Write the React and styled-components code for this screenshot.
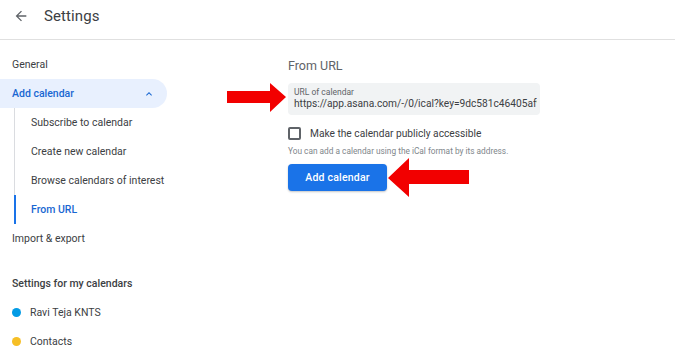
import React from "react";
import styled, { createGlobalStyle } from "styled-components";

const Global = createGlobalStyle`
  html, body { margin: 0; padding: 0; background: #fff; }
  body { font-family: Roboto, "Noto Sans", Arial, sans-serif; color: #3c4043; }
  * { box-sizing: border-box; }
`;

const Page = styled.div`
  position: relative;
  width: 675px;
  height: 356px;
  overflow: hidden;
`;

const Header = styled.header`
  height: 40px;
  display: flex;
  align-items: center;
  padding-left: 13px;
  gap: 15px;
  border-bottom: 1px solid #e0e0e0;
  padding-bottom: 7px;
`;

const Title = styled.h1`
  margin: 0;
  font-size: 15px;
  font-weight: 400;
  color: #3c4043;
  letter-spacing: 0.1px;
`;

const Body = styled.div`
  display: grid;
  grid-template-columns: 167px 1fr;
  column-gap: 121px;
  padding-top: 10px;
`;

const Nav = styled.nav`
  display: flex;
  flex-direction: column;
`;

const NavItem = styled.div`
  height: 29px;
  display: flex;
  align-items: center;
  justify-content: space-between;
  padding: 0 12px;
  font-size: 10.5px;
  font-weight: ${(p) => (p.$active ? 500 : 400)};
  color: ${(p) => (p.$active ? "#1967d2" : "#3c4043")};
  background: ${(p) => (p.$active ? "#e8f0fe" : "transparent")};
  border-radius: ${(p) => (p.$active ? "0 15px 15px 0" : "0")};
`;

const SubList = styled.div`
  margin-left: 14px;
  border-left: 1px solid #dadce0;
  display: flex;
  flex-direction: column;
`;

const SubItem = styled.div`
  height: 29px;
  display: flex;
  align-items: center;
  padding-left: 15px;
  margin-left: -1px;
  font-size: 10.5px;
  font-weight: ${(p) => (p.$active ? 500 : 400)};
  color: ${(p) => (p.$active ? "#1967d2" : "#3c4043")};
  border-left: 2px solid ${(p) => (p.$active ? "#1a73e8" : "transparent")};
`;

const SectionTitle = styled.div`
  height: 29px;
  margin-top: 16px;
  display: flex;
  align-items: center;
  padding-left: 12px;
  font-size: 10.5px;
  font-weight: 500;
  color: #3c4043;
`;

const CalItem = styled.div`
  height: 29px;
  display: flex;
  align-items: center;
  padding-left: 12px;
  gap: 9px;
  font-size: 10.5px;
  color: #3c4043;
`;

const Dot = styled.span`
  width: 9px;
  height: 9px;
  border-radius: 50%;
  background: ${(p) => p.$color};
`;

const Main = styled.main`
  display: flex;
  flex-direction: column;
  padding-top: 7px;
`;

const Heading = styled.h2`
  margin: 0;
  font-size: 12.5px;
  font-weight: 400;
  color: #5f6368;
  height: 17px;
  line-height: 17px;
`;

const Field = styled.div`
  margin-top: 9px;
  width: 252px;
  height: 32px;
  background: #f1f3f4;
  border-radius: 4px;
  padding: 4px 3px 0 6px;
  overflow: hidden;
`;

const FieldLabel = styled.div`
  font-size: 8.5px;
  line-height: 10px;
  color: #5f6368;
`;

const FieldValue = styled.div`
  font-size: 10.2px;
  line-height: 14px;
  color: #3c4043;
  white-space: nowrap;
  overflow: hidden;
  text-overflow: clip;
`;

const CheckRow = styled.label`
  margin-top: 11px;
  display: flex;
  align-items: center;
  gap: 9px;
  font-size: 10.2px;
  color: #3c4043;
  height: 14px;
`;

const Box = styled.span`
  width: 13px;
  height: 13px;
  border: 2px solid #5f6368;
  border-radius: 2px;
`;

const Hint = styled.div`
  margin-top: 5px;
  font-size: 8.3px;
  color: #80868b;
  height: 12px;
  line-height: 12px;
`;

const Button = styled.button`
  margin-top: 7px;
  width: 99px;
  height: 27px;
  border: none;
  border-radius: 4px;
  background: #1a73e8;
  color: #fff;
  font-family: inherit;
  font-size: 10.5px;
  font-weight: 500;
  letter-spacing: 0.2px;
  box-shadow: 0 1px 2px rgba(60, 64, 67, 0.3);
`;

const Annotation = styled.svg`
  position: absolute;
  left: 0;
  top: 0;
  pointer-events: none;
`;

export default function App() {
  return (
    <Page>
      <Global />
      <Header>
        <svg width="16" height="16" viewBox="0 0 24 24" fill="#5f6368">
          <path d="M20 11H7.83l5.59-5.59L12 4l-8 8 8 8 1.41-1.41L7.83 13H20v-2z" />
        </svg>
        <Title>Settings</Title>
      </Header>
      <Body>
        <Nav>
          <NavItem>General</NavItem>
          <NavItem $active>
            Add calendar
            <svg width="12" height="12" viewBox="0 0 24 24" fill="#1967d2">
              <path d="M7.41 15.41L12 10.83l4.59 4.58L18 14l-6-6-6 6z" />
            </svg>
          </NavItem>
          <SubList>
            <SubItem>Subscribe to calendar</SubItem>
            <SubItem>Create new calendar</SubItem>
            <SubItem>Browse calendars of interest</SubItem>
            <SubItem $active>From URL</SubItem>
          </SubList>
          <NavItem>Import &amp; export</NavItem>
          <SectionTitle>Settings for my calendars</SectionTitle>
          <CalItem>
            <Dot $color="#039be5" />
            Ravi Teja KNTS
          </CalItem>
          <CalItem>
            <Dot $color="#f6bf26" />
            Contacts
          </CalItem>
        </Nav>
        <Main>
          <Heading>From URL</Heading>
          <Field>
            <FieldLabel>URL of calendar</FieldLabel>
            <FieldValue>https://app.asana.com/-/0/ical?key=9dc581c46405af9c2b1e</FieldValue>
          </Field>
          <CheckRow>
            <Box />
            Make the calendar publicly accessible
          </CheckRow>
          <Hint>You can add a calendar using the iCal format by its address.</Hint>
          <div>
            <Button>Add calendar</Button>
          </div>
        </Main>
      </Body>
      <Annotation width="675" height="356" viewBox="0 0 675 356">
        <polygon
          points="227,91 270,91 270,83 286,97 270,112 270,103 227,103"
          fill="#f20000"
        />
        <polygon
          points="388,178 409,158 409,170 469,170 469,184 409,184 409,197"
          fill="#f20000"
        />
      </Annotation>
    </Page>
  );
}
